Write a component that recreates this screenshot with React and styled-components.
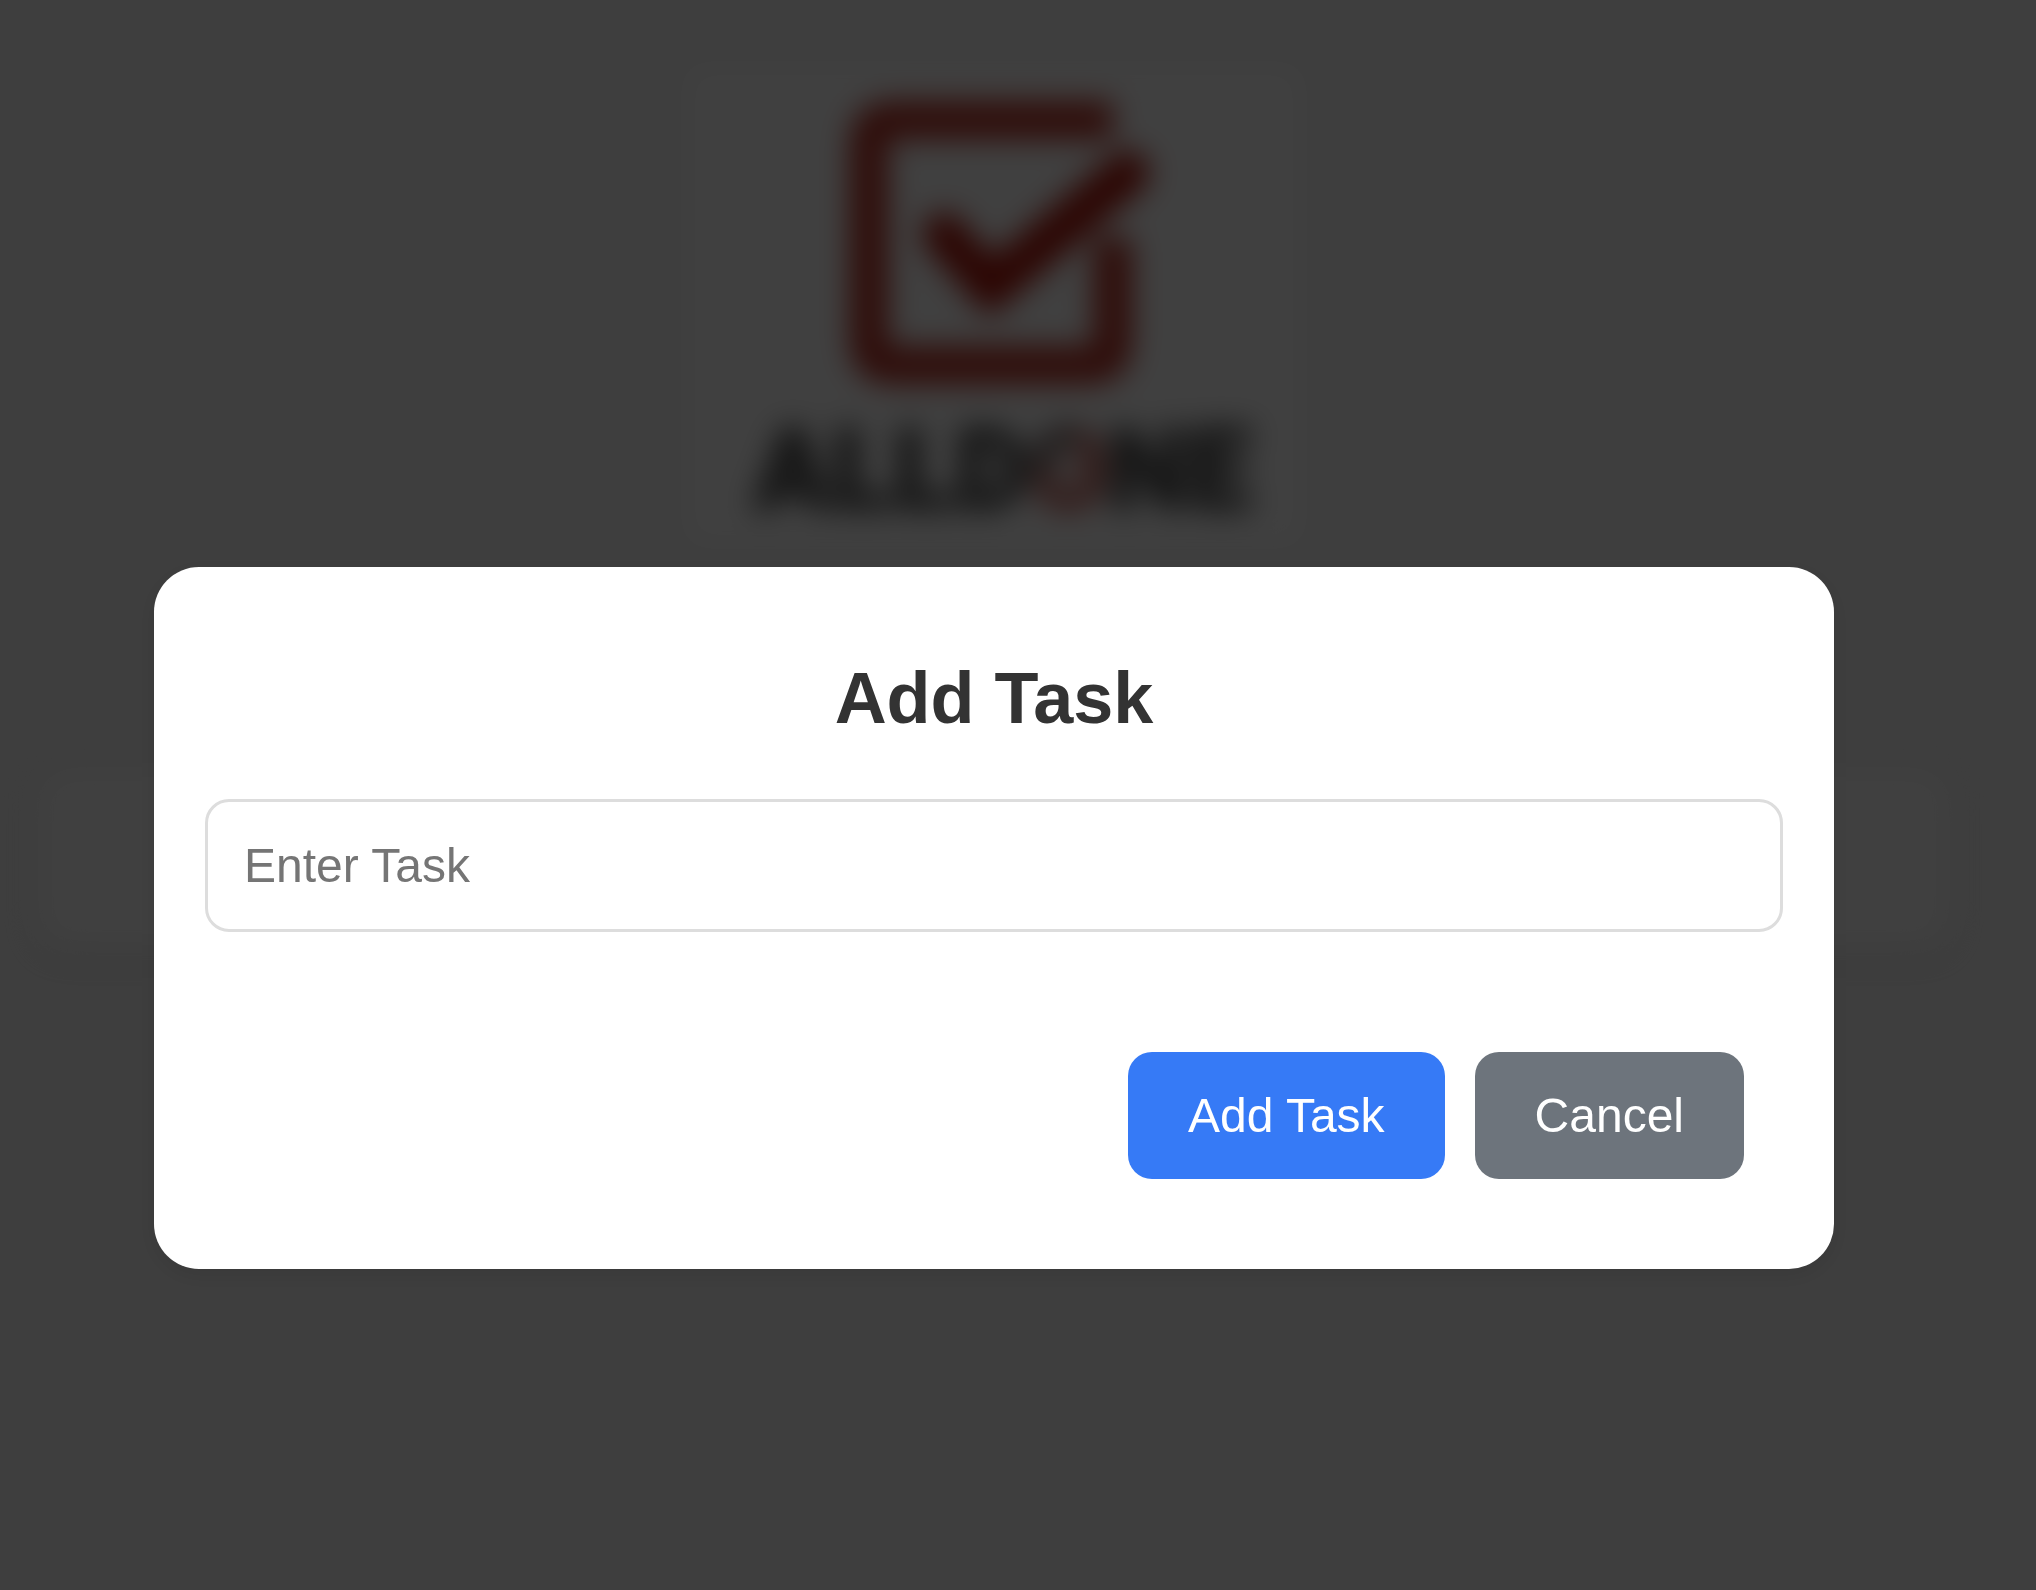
import React, { useState } from "react";
import styled, { createGlobalStyle } from "styled-components";

const GlobalStyle = createGlobalStyle`
  * {
    box-sizing: border-box;
  }

  body {
    margin: 0;
    min-height: 100vh;
    background: #f5f5f5;
    font-family: "Liberation Sans", Arial, sans-serif;
  }
`;

const Page = styled.main`
  display: flex;
  flex-direction: column;
  align-items: center;
  gap: 228px;
  padding: 66px 88px 66px 40px;
  filter: blur(15px);
`;

const LogoFrame = styled.div`
  width: 616px;
  height: 478px;
  background: #ffffff;

  svg {
    display: block;
    width: 100%;
    height: 100%;
  }
`;

const TaskCard = styled.section`
  width: 100%;
  height: 174px;
  border-radius: 30px;
  background: #ffffff;
  box-shadow: 0 12px 18px rgba(0, 0, 0, 0.05);
`;

const Overlay = styled.div`
  position: fixed;
  inset: 0;
  display: flex;
  align-items: center;
  justify-content: center;
  padding: 246px 48px 0 0;
  background: rgba(0, 0, 0, 0.75);
`;

const Dialog = styled.form`
  display: flex;
  flex-direction: column;
  width: 85%;
  max-width: 1680px;
  padding: 51px;
  border-radius: 45px;
  background: #ffffff;
  box-shadow: 0 6px 24px rgba(0, 0, 0, 0.1);
`;

const Title = styled.h2`
  margin: 38px 0 59px;
  color: #333333;
  font-size: 72px;
  font-weight: 700;
  line-height: 84px;
  text-align: center;
`;

const TaskInput = styled.input`
  width: 100%;
  height: 133px;
  padding: 36px;
  border: 3px solid #dddddd;
  border-radius: 24px;
  background: #ffffff;
  color: #333333;
  font-family: inherit;
  font-size: 48px;
  line-height: 55px;
  outline: none;

  &::placeholder {
    color: #757575;
    opacity: 1;
  }
`;

const Actions = styled.div`
  display: flex;
  justify-content: flex-end;
  gap: 30px;
  margin-top: 81px;
  padding: 39px;
`;

const Button = styled.button`
  padding: 36px 60px;
  border: 0;
  border-radius: 24px;
  background: ${({ $primary }) => ($primary ? "#367af6" : "#6d747c")};
  color: #ffffff;
  font-family: inherit;
  font-size: 48px;
  line-height: 55px;
  cursor: pointer;
`;

function Logo() {
  return (
    <svg viewBox="0 0 616 478" role="img" aria-label="AllDone">
      <defs>
        <linearGradient
          id="ring"
          gradientUnits="userSpaceOnUse"
          x1="350"
          y1="370"
          x2="410"
          y2="430"
        >
          <stop offset="0.25" stopColor="#6a5c5c" />
          <stop offset="0.45" stopColor="#c25a52" />
        </linearGradient>
      </defs>
      <path
        d="M427 54H206Q183 54 183 77V276Q183 299 206 299H404Q427 299 427 276V172"
        fill="none"
        stroke="#b93024"
        strokeWidth="38"
      />
      <path
        d="M258 168L305 221L442 106"
        fill="none"
        stroke="#b0180c"
        strokeWidth="43"
        strokeLinecap="round"
      />
      <text
        x="68"
        y="443"
        fontFamily="Roboto, sans-serif"
        fontSize="114"
        fontWeight="900"
        fill="#4a4a4a"
        stroke="#4a4a4a"
        strokeWidth="3"
      >
        ALLD
        <tspan fill="url(#ring)" stroke="url(#ring)">O</tspan>
        NE
      </text>
    </svg>
  );
}

export default function App() {
  const [task, setTask] = useState("");

  return (
    <>
      <GlobalStyle />
      <Page aria-hidden="true">
        <LogoFrame>
          <Logo />
        </LogoFrame>
        <TaskCard />
      </Page>
      <Overlay>
        <Dialog
          role="dialog"
          aria-modal="true"
          aria-labelledby="dialog-title"
          onSubmit={(event) => event.preventDefault()}
        >
          <Title id="dialog-title">Add Task</Title>
          <TaskInput
            type="text"
            aria-labelledby="dialog-title"
            placeholder="Enter Task"
            value={task}
            onChange={(event) => setTask(event.target.value)}
          />
          <Actions>
            <Button type="submit" $primary>
              Add Task
            </Button>
            <Button type="button" onClick={() => setTask("")}>
              Cancel
            </Button>
          </Actions>
        </Dialog>
      </Overlay>
    </>
  );
}
